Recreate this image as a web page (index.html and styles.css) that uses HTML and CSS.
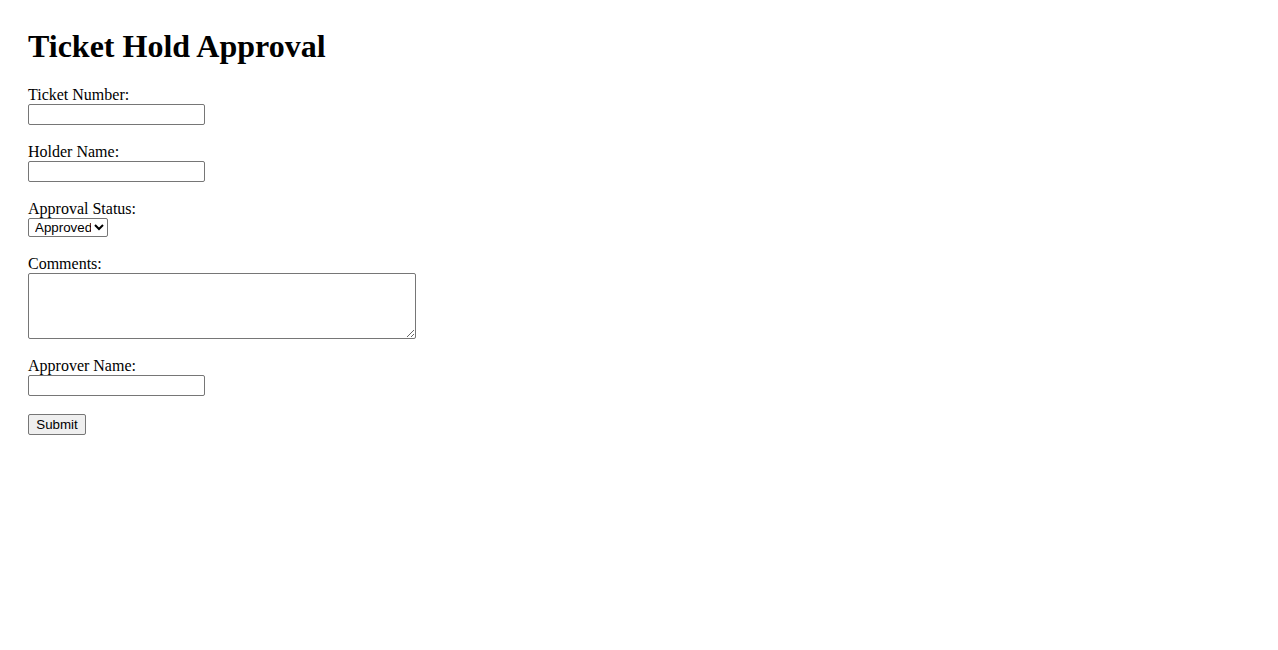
FILE: index.html
```html
<!DOCTYPE html>
<html lang="en">
<head>
    <meta charset="UTF-8">
    <meta name="viewport" content="width=device-width, initial-scale=1.0">
    <title>Ticket Hold Approval</title>
    <link rel="stylesheet" href="styles.css">
</head>
<body>

<div class="container">
    <h1>Ticket Hold Approval</h1>
    <form id="hold-form">
        <div class="form-group">
            <label for="ticket">Ticket Number:</label>
            <input type="text" id="ticket" name="ticket">
        </div>

        <div class="form-group">
            <label for="holder">Holder Name:</label>
            <input type="text" id="holder" name="holder">
        </div>

        <div class="form-group">
            <label for="status">Approval Status:</label>
            <select id="status" name="status">
                <option value="approved">Approved</option>
                <option value="rejected">Rejected</option>
                <option value="pending">Pending</option>
            </select>
        </div>

        <div class="form-group">
            <label for="comments">Comments:</label>
            <textarea id="comments" name="comments"></textarea>
        </div>

        <div class="form-group">
            <label for="approver">Approver Name:</label>
            <input type="text" id="approver" name="approver">
        </div>

        <button type="submit">Submit</button>
    </form>
</div>

</body>
</html>
```

FILE: styles.css
```css
body {
    margin: 8px;
    font-family: "Liberation Serif", "Times New Roman", serif;
    font-size: 16px;
    color: #000;
    background: #fff;
}

.container {
    padding: 20px;
}

h1 {
    margin: 0 0 21px;
    font-size: 32px;
    font-weight: bold;
    line-height: 37px;
}

.form-group {
    margin-bottom: 18px;
}

label {
    display: block;
    line-height: 18px;
}

input[type="text"],
select,
textarea,
button {
    box-sizing: border-box;
    margin: 0;
    border: 1px solid #767676;
    border-radius: 2px;
    background-color: #fff;
    color: #000;
}

input[type="text"] {
    display: block;
    width: 177px;
    height: 21px;
    padding: 1px 2px;
    font-size: 13.33px;
}

select {
    display: block;
    width: 80px;
    height: 19px;
    padding: 0 0 0 2px;
    font-family: "Liberation Sans", Arial, sans-serif;
    font-size: 13.33px;
}

textarea {
    display: block;
    width: 388px;
    height: 66px;
    padding: 2px;
    font-family: "Liberation Mono", monospace;
    font-size: 13.33px;
}

button {
    width: 58px;
    height: 21px;
    padding: 1px 6px;
    background-color: #efefef;
    font-family: "Liberation Sans", Arial, sans-serif;
    font-size: 13.33px;
}
```
